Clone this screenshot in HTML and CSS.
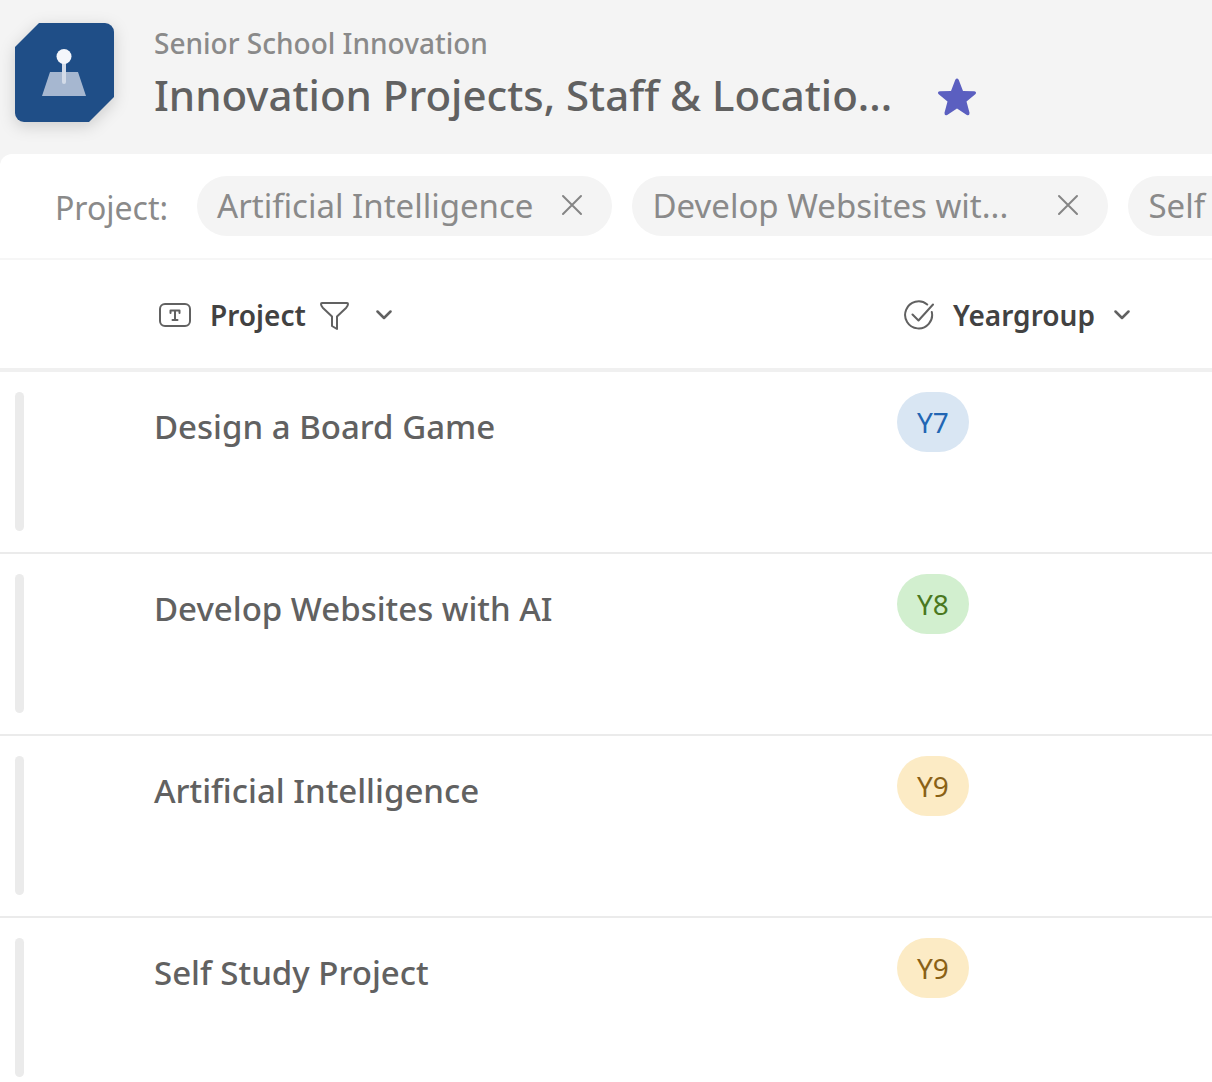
FILE: index.html
```html
<!DOCTYPE html>
<html lang="en">
<head>
<meta charset="utf-8">
<meta name="viewport" content="width=device-width, initial-scale=1">
<title>Innovation Projects, Staff &amp; Locations</title>
<link rel="stylesheet" href="styles.css">
</head>
<body>
<div class="app">
  <header class="list-header">
    <svg class="logo" viewBox="0 0 99 99" aria-hidden="true">
      <path fill="#1f4e87" d="M24 0H90a9 9 0 0 1 9 9V74L74 99H9a9 9 0 0 1-9-9V24Z"/>
      <path fill="#a6b7d0" d="M35 49H63L71 73H27Z"/>
      <path fill="#d3dbe8" d="M47 38H51V59a2 2 0 0 1-4 0Z"/>
      <circle fill="#f4f6fb" cx="49" cy="33.500" r="7.500"/>
    </svg>
    <div class="titles">
      <p class="site-name">Senior School Innovation</p>
      <div class="title-row">
        <h1 class="list-title">Innovation Projects, Staff &amp; Locatio...</h1>
        <button class="icon-button favourite" type="button" aria-label="Favourite">
          <svg class="star" viewBox="0 0 40 38" aria-hidden="true">
            <path d="M18.300 1.800Q20-.8 21.700 1.800L26 13 37.200 13.300Q40.200 14 38.300 16.300L29.500 23.500 32.500 34.700Q32.600 38.200 29.800 36.900L20 30.600 10.200 36.900Q7.400 38.200 7.500 34.700L10.500 23.500 1.700 16.300Q-.2 14 2.800 13.300L14 13Z"/>
          </svg>
        </button>
      </div>
    </div>
  </header>
  <main class="list-panel">
    <section class="filters" aria-label="Active filters">
      <span class="filter-name">Project:</span>
      <ul class="chips">
        <li class="chip"><span class="chip-label">Artificial Intelligence</span>
          <button class="icon-button" type="button" aria-label="Remove Artificial Intelligence"><svg class="close" viewBox="0 0 20 20" aria-hidden="true"><path d="M1 0 19 18M19 0 1 18"/></svg></button></li>
        <li class="chip"><span class="chip-label chip-label-long">Develop Websites wit...</span>
          <button class="icon-button" type="button" aria-label="Remove Develop Websites with AI"><svg class="close" viewBox="0 0 20 20" aria-hidden="true"><path d="M1 0 19 18M19 0 1 18"/></svg></button></li>
        <li class="chip"><span class="chip-label">Self Study Project</span>
          <button class="icon-button" type="button" aria-label="Remove Self Study Project"><svg class="close" viewBox="0 0 20 20" aria-hidden="true"><path d="M1 0 19 18M19 0 1 18"/></svg></button></li>
      </ul>
    </section>
    <table class="items">
      <thead>
        <tr>
          <td class="col-marker"></td>
          <th class="col-project" scope="col">
            <button class="column-button" type="button">
              <svg class="type-icon" viewBox="0 0 32 32" aria-hidden="true"><rect x="1" y="5" width="30" height="22" rx="5"/><path d="M11.500 14V11.500H20.500V14M16 11.500V21M13.500 21H18.500"/></svg>
              <span class="column-name">Project</span>
              <svg class="funnel" viewBox="0 0 30 30" aria-hidden="true"><path d="M1 4Q1 3 2 3H27Q28 3 28 4 28 6 26 8L17 16.500V29L12 26V16.500L3 8Q1 6 1 4Z"/></svg>
              <svg class="chevron" viewBox="0 0 16 16" aria-hidden="true"><path d="M1.500 4.500 8 11 14.500 4.500"/></svg>
            </button>
          </th>
          <th class="col-year" scope="col">
            <button class="column-button" type="button">
              <svg class="type-icon" viewBox="0 0 32 32" aria-hidden="true"><path d="M25.200 5.500A13.500 13.500 0 1 0 29.800 13M10.500 15.500 16.500 21.500 31 5.500"/></svg>
              <span class="column-name">Yeargroup</span>
              <svg class="chevron" viewBox="0 0 16 16" aria-hidden="true"><path d="M1.500 4.500 8 11 14.500 4.500"/></svg>
            </button>
          </th>
        </tr>
      </thead>
      <tbody>
        <tr><td class="col-marker"><div class="marker"></div></td><td class="project">Design a Board Game</td><td><span class="tag tag-blue">Y7</span></td></tr>
        <tr><td class="col-marker"><div class="marker"></div></td><td class="project">Develop Websites with AI</td><td><span class="tag tag-green">Y8</span></td></tr>
        <tr><td class="col-marker"><div class="marker"></div></td><td class="project">Artificial Intelligence</td><td><span class="tag tag-yellow">Y9</span></td></tr>
        <tr><td class="col-marker"><div class="marker"></div></td><td class="project">Self Study Project</td><td><span class="tag tag-yellow">Y9</span></td></tr>
      </tbody>
    </table>
  </main>
</div>
</body>
</html>
```
FILE: styles.css
```css
* { box-sizing: border-box; }

body {
  margin: 0;
  background: #f4f4f4;
  color: #616161;
  font-family: "Noto Sans", "Open Sans", sans-serif;
}

.app {
  height: 100vh;
  overflow: hidden;
}

button {
  padding: 0;
  border: 0;
  background: none;
  color: inherit;
  font: inherit;
  cursor: pointer;
}

svg { display: block; flex: none; }

.list-header {
  display: flex;
  gap: 40px;
  padding: 23px 15px 22px;
}

.logo {
  width: 99px;
  height: 99px;
  margin-bottom: 10px;
  filter: drop-shadow(0 4px 8px rgba(0, 0, 0, 0.16));
}

.site-name {
  margin: 0;
  color: #8a8a8a;
  font-size: 28px;
  font-weight: 500;
  line-height: 40px;
}

.title-row {
  display: flex;
  align-items: center;
  gap: 45px;
}

.list-title {
  margin: 0;
  font-size: 42px;
  font-weight: 500;
  line-height: 64px;
  white-space: nowrap;
}

.icon-button { flex: none; }

.favourite { padding-top: 4px; }

.star {
  width: 40px;
  height: 38px;
  fill: #5b5fc0;
}

.list-panel {
  border-radius: 12px 0 0 0;
  background: #fff;
}

.filters {
  display: flex;
  align-items: center;
  gap: 29px;
  height: 106px;
  padding-left: 55px;
  overflow: hidden;
  border-bottom: 2px solid #f6f6f6;
  color: #8a8a8a;
  font-size: 32px;
}

.filter-name { padding-top: 2px; }

.chips {
  display: flex;
  gap: 20px;
  margin: 0;
  padding: 0;
  list-style: none;
}

.chip {
  display: flex;
  flex: none;
  align-items: center;
  gap: 29px;
  height: 60px;
  padding: 0 30px 0 20px;
  border-radius: 30px;
  background: #f4f4f4;
  font-size: 33px;
  line-height: 60px;
  white-space: nowrap;
}

.chip-label-long { width: 377px; }

.close {
  width: 20px;
  height: 20px;
  overflow: visible;
  fill: none;
  stroke: #858585;
  stroke-width: 2;
  stroke-linecap: round;
}

.items {
  width: 100%;
  border-collapse: separate;
  border-spacing: 0;
  table-layout: fixed;
}

.items thead td,
.items th {
  height: 112px;
  padding: 0;
  border-bottom: 4px solid #f0f0f0;
  text-align: left;
}

.items tbody td {
  height: 182px;
  padding: 20px 0 0;
  border-bottom: 2px solid #ebebeb;
  vertical-align: top;
}

.items .col-marker {
  width: 154px;
  padding-left: 15px;
}

.col-project { width: 743px; }

.marker {
  width: 9px;
  height: 139px;
  border-radius: 5px;
  background: #ebebeb;
}

.column-button {
  display: flex;
  align-items: center;
  gap: 14px;
  padding: 2px 0 0 5px;
  color: #424242;
}

.column-name {
  margin-left: 5px;
  font-size: 28px;
  font-weight: 600;
  line-height: 40px;
}

.type-icon,
.funnel,
.chevron {
  fill: none;
  stroke: #616161;
  stroke-width: 2;
  stroke-linecap: round;
  stroke-linejoin: round;
}

.type-icon { width: 32px; height: 32px; }
.funnel { width: 30px; height: 30px; margin-right: 12px; }
.chevron { width: 16px; height: 16px; margin-left: 5px; }
.chevron path { stroke-width: 2.5; }
.funnel + .chevron { margin-left: 0; }

.project {
  font-size: 33px;
  font-weight: 500;
  line-height: 70px;
}

.tag {
  display: inline-block;
  padding: 0 20px;
  border-radius: 30px;
  font-size: 28px;
  line-height: 60px;
}

.tag-blue { background: #d9e6f3; color: #2266b3; }
.tag-green { background: #d2efcf; color: #4a7820; }
.tag-yellow { background: #fcebc5; color: #8a6116; }
```
